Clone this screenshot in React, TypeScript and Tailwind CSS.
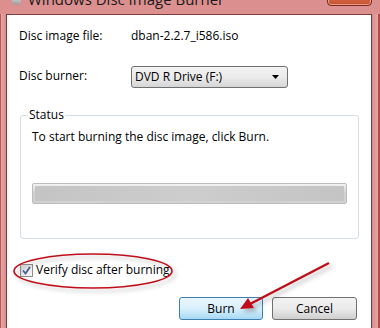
const font = "font-['Segoe_UI','Open_Sans','Noto_Sans',sans-serif]";

function Checkbox() {
  return (
    <span className="flex h-[13px] w-[13px] items-center justify-center border border-[#8f8f8f] bg-gradient-to-br from-[#dcdcdc] to-[#f8f8f8]">
      <svg width="9" height="9" viewBox="0 0 9 9">
        <path d="M1 4.5 L3.5 7.5 L8 1" fill="none" stroke="#4a5f97" strokeWidth="1.8" />
      </svg>
    </span>
  );
}

export default function App() {
  return (
    <div className={`${font} relative flex h-[328px] w-[380px] flex-col overflow-hidden bg-gradient-to-b from-[#dc8f8f] to-[#e9a9a9] text-[12px] text-black`}>
      {/* title bar */}
      <div className="relative h-[14px] shrink-0">
        <div className="absolute left-[12px] top-[-6px] h-[11px] w-[9px] rounded-sm bg-gradient-to-b from-[#f2f2f2] to-[#9a9a9a]" />
        <span className="absolute left-[28px] top-[-11px] text-[15px] leading-[20px] text-[#1a1a1a]">
          Windows Disc Image Burner
        </span>
        <div className="absolute right-[8px] top-[-10px] h-[16px] w-[45px] rounded-b-[4px] border border-[#7a2a20] bg-gradient-to-b from-[#e07d5e] to-[#c8502f] shadow-[inset_0_0_0_1px_rgba(255,210,190,0.6)]" />
      </div>

      <div className="flex flex-1">
        <div className="w-[6px] shrink-0 border-l border-[#b85a5a] bg-gradient-to-r from-[#e6a6a6] to-[#d98d8d]" />
        <div className="relative flex flex-1 flex-col border border-b-0 border-[#7d3b3b] bg-white">
          {/* file row */}
          <div className="ml-[12px] mt-[12px] flex h-[18px] items-center">
            <span className="w-[112px]">Disc image file:</span>
            <span>dban-2.2.7_i586.iso</span>
          </div>
          {/* burner row */}
          <div className="ml-[12px] mt-[21px] flex items-center">
            <span className="w-[112px] pb-[3px]">Disc burner:</span>
            <div className="flex h-[22px] w-[157px] items-center justify-between rounded-[3px] border border-[#707070] bg-gradient-to-b from-[#f2f2f2] via-[#ebebeb] to-[#d6d6d6] pl-[3px] pr-[8px]">
              <span>DVD R Drive (F:)</span>
              <svg width="7" height="4" viewBox="0 0 7 4">
                <path d="M0 0 H7 L3.5 4 Z" fill="#000" />
              </svg>
            </div>
          </div>
          {/* status group */}
          <div className="relative ml-[13px] mt-[27px] h-[124px] w-[339px] rounded-[3px] border border-[#d5dfe5]">
            <span className="absolute left-[7px] top-[-9px] bg-white px-[1px] leading-[16px]">Status</span>
            <div className="ml-[11px] mt-[12px]">To start burning the disc image, click Burn.</div>
            <div className="ml-[11px] mt-[37px] h-[21px] w-[315px] rounded-[2px] border border-[#bcbcbc] bg-gradient-to-b from-[#f3f3f3] via-[#cfcfcf] to-[#d2d2d2] p-[2px]">
              <div className="h-full w-full rounded-[1px] bg-gradient-to-r from-[#c4c4c4] via-[#cdcdcd] to-[#c4c4c4]" />
            </div>
          </div>
          {/* verify */}
          <div className="ml-[13px] mt-[22px] flex items-center gap-[3px]">
            <Checkbox />
            <span>Verify disc after burning</span>
          </div>
          {/* buttons */}
          <div className="ml-[172px] mt-[18px] flex gap-[9px]">
            <button className="flex h-[23px] w-[84px] items-center justify-center rounded-[3px] border border-[#3c7fb1] bg-gradient-to-b from-[#eaf6fd] via-[#d9f0fc] to-[#a7d9f5]">
              Burn
            </button>
            <button className="flex h-[23px] w-[85px] items-center justify-center rounded-[3px] border border-[#707070] bg-gradient-to-b from-[#f2f2f2] via-[#ebebeb] to-[#cfcfcf]">
              Cancel
            </button>
          </div>

          {/* red annotation */}
          <svg className="pointer-events-none absolute left-[-7px] top-[-14px]" width="380" height="342" viewBox="0 0 380 342">
            <defs>
              <filter id="sh" x="-10%" y="-30%" width="130%" height="180%">
                <feDropShadow dx="3" dy="3" stdDeviation="2" floodColor="#000" floodOpacity="0.25" />
              </filter>
            </defs>
            <ellipse cx="93" cy="270" rx="79" ry="17" fill="none" stroke="#c0111a" strokeWidth="1.6" filter="url(#sh)" />
            <g filter="url(#sh)">
              <line x1="329" y1="262" x2="250" y2="303" stroke="#c0111a" strokeWidth="2.5" />
              <path d="M240 308 L248 297 L254 307 Z" fill="#c0111a" />
            </g>
          </svg>
        </div>
        <div className="w-[8px] shrink-0 border-r-[2px] border-[#b84848] bg-gradient-to-r from-[#d98d8d] to-[#e6a6a6]" />
      </div>
    </div>
  );
}
